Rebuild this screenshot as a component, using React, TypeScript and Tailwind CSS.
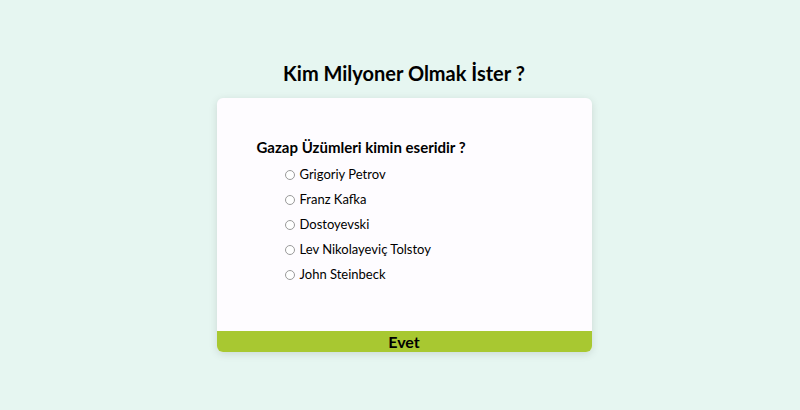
import React from "react";

const options = [
  "Grigoriy Petrov",
  "Franz Kafka",
  "Dostoyevski",
  "Lev Nikolayeviç Tolstoy",
  "John Steinbeck",
];

export default function App() {
  return (
    <div
      className="w-[800px] h-[410px] bg-[#e6f6f1] flex flex-col items-center pl-[8px] pt-[59px]"
      style={{ fontFamily: "Lato, 'Noto Sans', sans-serif" }}
    >
      <h1 className="text-[20px] leading-[28px] font-bold text-black">Kim Milyoner Olmak İster ?</h1>
      <div className="mt-[11px] w-[375px] h-[254px] bg-[#fefcff] rounded-[6px] shadow-[0_2px_8px_rgba(0,0,0,0.12)] flex flex-col overflow-hidden">
        <div className="flex-1 pl-[40px] pt-[37px]">
          <h2 className="text-[15px] leading-[24px] font-bold text-black">Gazap Üzümleri kimin eseridir ?</h2>
          <ul className="mt-[3px] pl-[28px] flex flex-col">
            {options.map((o) => (
              <li key={o} className="h-[25px] flex items-center gap-[5px] text-[13px] text-black">
                <span className="w-[10px] h-[10px] rounded-full border border-[#9a9a9a] bg-white" />
                <span>{o}</span>
              </li>
            ))}
          </ul>
        </div>
        <button className="h-[21px] bg-[#a8c831] text-[16px] leading-[21px] font-bold text-black">Evet</button>
      </div>
    </div>
  );
}
